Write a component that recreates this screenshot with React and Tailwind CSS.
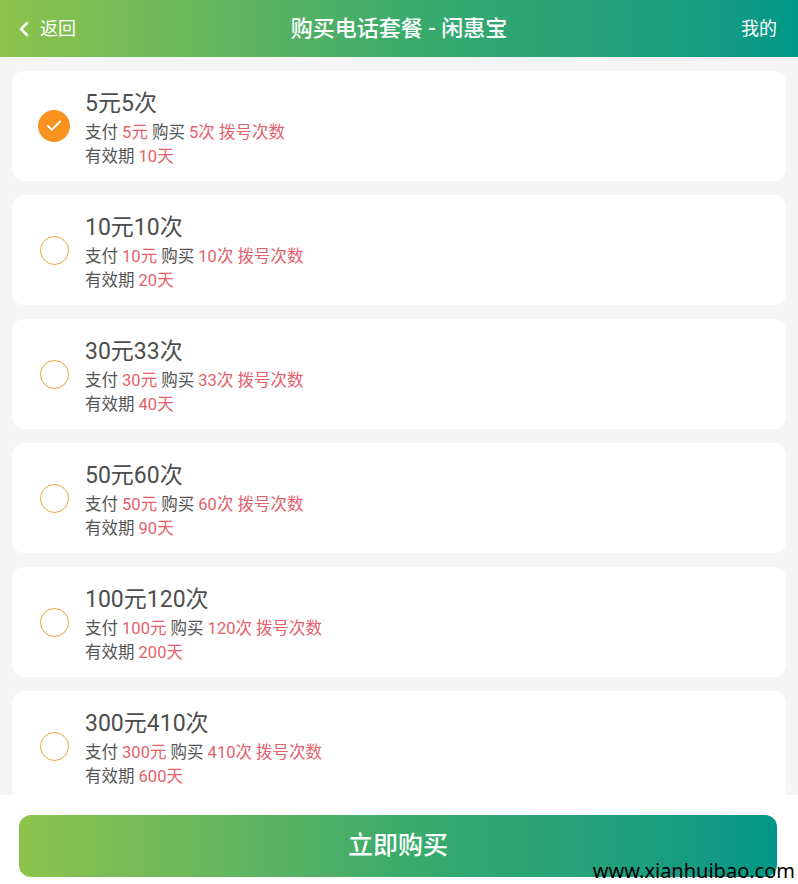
import { ChevronLeft, Check } from 'lucide-react';

const plans = [
  { money: 5, times: 5, days: 10 },
  { money: 10, times: 10, days: 20 },
  { money: 30, times: 33, days: 40 },
  { money: 50, times: 60, days: 90 },
  { money: 100, times: 120, days: 200 },
  { money: 300, times: 410, days: 600 },
];

const font = { fontFamily: 'Roboto, "Noto Sans CJK SC", sans-serif' };

export default function App() {
  const selected = 0;

  return (
    <div className="h-[884px] flex flex-col bg-[#f5f5f5] overflow-hidden relative" style={font}>
      {/* Header */}
      <div className="h-[57px] shrink-0 flex items-center justify-between px-[12px] text-white bg-gradient-to-r from-[#8cc34b] via-[#3aab6a] to-[#009788]">
        <div className="flex items-center gap-[4px] w-[114px]">
          <ChevronLeft className="w-[24px] h-[24px]" strokeWidth={2.5} />
          <span className="text-[18px]">返回</span>
        </div>
        <div className="text-[22px] font-medium">购买电话套餐 - 闲惠宝</div>
        <div className="w-[114px] text-right text-[18px] pr-[9px]">我的</div>
      </div>

      {/* Plans */}
      <div className="flex-1 overflow-hidden flex flex-col gap-[14px] pt-[14px] px-[12px]">
        {plans.map((p, i) => (
          <div key={i} className="h-[110px] shrink-0 bg-white rounded-[12px] flex items-center pl-[26px]">
            {i === selected ? (
              <div className="w-[32px] h-[32px] rounded-full bg-[#f7931e] flex items-center justify-center">
                <Check className="w-[18px] h-[18px] text-white" strokeWidth={2.5} />
              </div>
            ) : (
              <div className="w-[29px] h-[29px] mx-[1.5px] rounded-full border-[1.5px] border-[#eaa340]" />
            )}
            <div className="ml-[15px] mt-[3px] text-[#555]">
              <div className="text-[23px] leading-[34px] text-[#4d4d4d]">{p.money}元{p.times}次</div>
              <div className="text-[16.5px] leading-[24px]">
                支付 <span className="text-[#e5616c]">{p.money}元</span> 购买{' '}
                <span className="text-[#e5616c]">{p.times}次 拨号次数</span>
              </div>
              <div className="text-[16.5px] leading-[24px]">
                有效期 <span className="text-[#e5616c]">{p.days}天</span>
              </div>
            </div>
          </div>
        ))}
      </div>

      {/* Bottom bar */}
      <div className="h-[89px] shrink-0 bg-white px-[19px] pt-[20px] pb-[7px] -mt-[1px] relative">
        <button className="w-[758px] h-[62px] rounded-[12px] text-white text-[25px] font-medium bg-gradient-to-r from-[#8cc34b] via-[#3aab6a] to-[#009788]">
          立即购买
        </button>
        <div
          className="absolute right-[3px] bottom-[2px] text-[20px] leading-[22px] text-black"
          style={{ fontFamily: '"Noto Sans", "Open Sans", sans-serif' }}
        >
          www.xianhuibao.com
        </div>
      </div>
    </div>
  );
}
